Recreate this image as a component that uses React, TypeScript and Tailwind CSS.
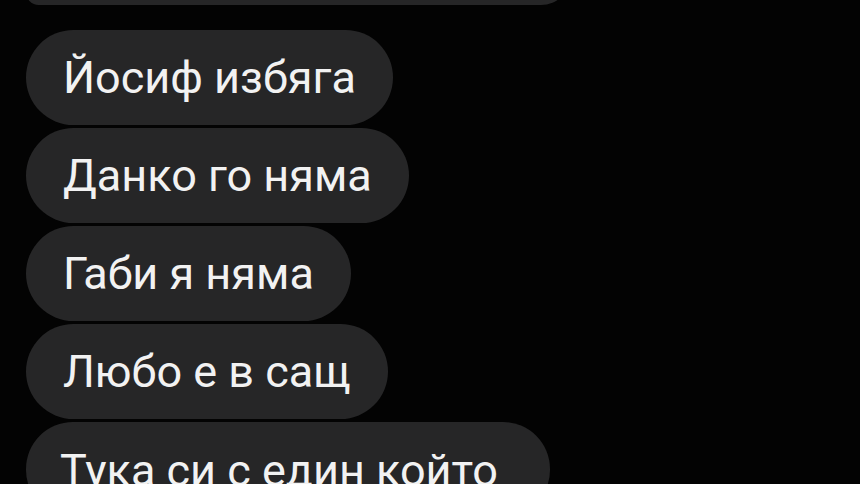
const messages = [
  { id: 1, text: "Йосиф избяга" },
  { id: 2, text: "Данко го няма" },
  { id: 3, text: "Габи я няма" },
  { id: 4, text: "Любо е в сащ" },
];

function Bubble({ text, className = "" }: { text: string; className?: string }) {
  return (
    <div
      className={`flex h-[95px] shrink-0 items-center rounded-full bg-[#262627] px-[37px] text-[45px] leading-none text-[#f2f2f2] ${className}`}
    >
      <span className="whitespace-nowrap">{text}</span>
    </div>
  );
}

export default function App() {
  return (
    <div
      className="h-[484px] w-[860px] overflow-hidden bg-[#030303]"
      style={{ fontFamily: "Roboto, 'Noto Sans', sans-serif" }}
    >
      <div className="flex flex-col items-start gap-[3px] pl-[26px]">
        {/* previous bubble, only its bottom edge shows */}
        <div className="-mt-[55px] mb-[22px] h-[60px] w-[545px] shrink-0 rounded-[47px] rounded-bl-[20px] bg-[#262627]" />

        {messages.map((m) => (
          <Bubble key={m.id} text={m.text} />
        ))}

        <div className="flex h-[95px] w-[524px] shrink-0 items-start rounded-[47px] bg-[#262627] px-[34px] pt-[22px] text-[45px] leading-[1.2] text-[#f2f2f2]">
          <span className="whitespace-nowrap">Тука си с един който</span>
        </div>
      </div>
    </div>
  );
}
